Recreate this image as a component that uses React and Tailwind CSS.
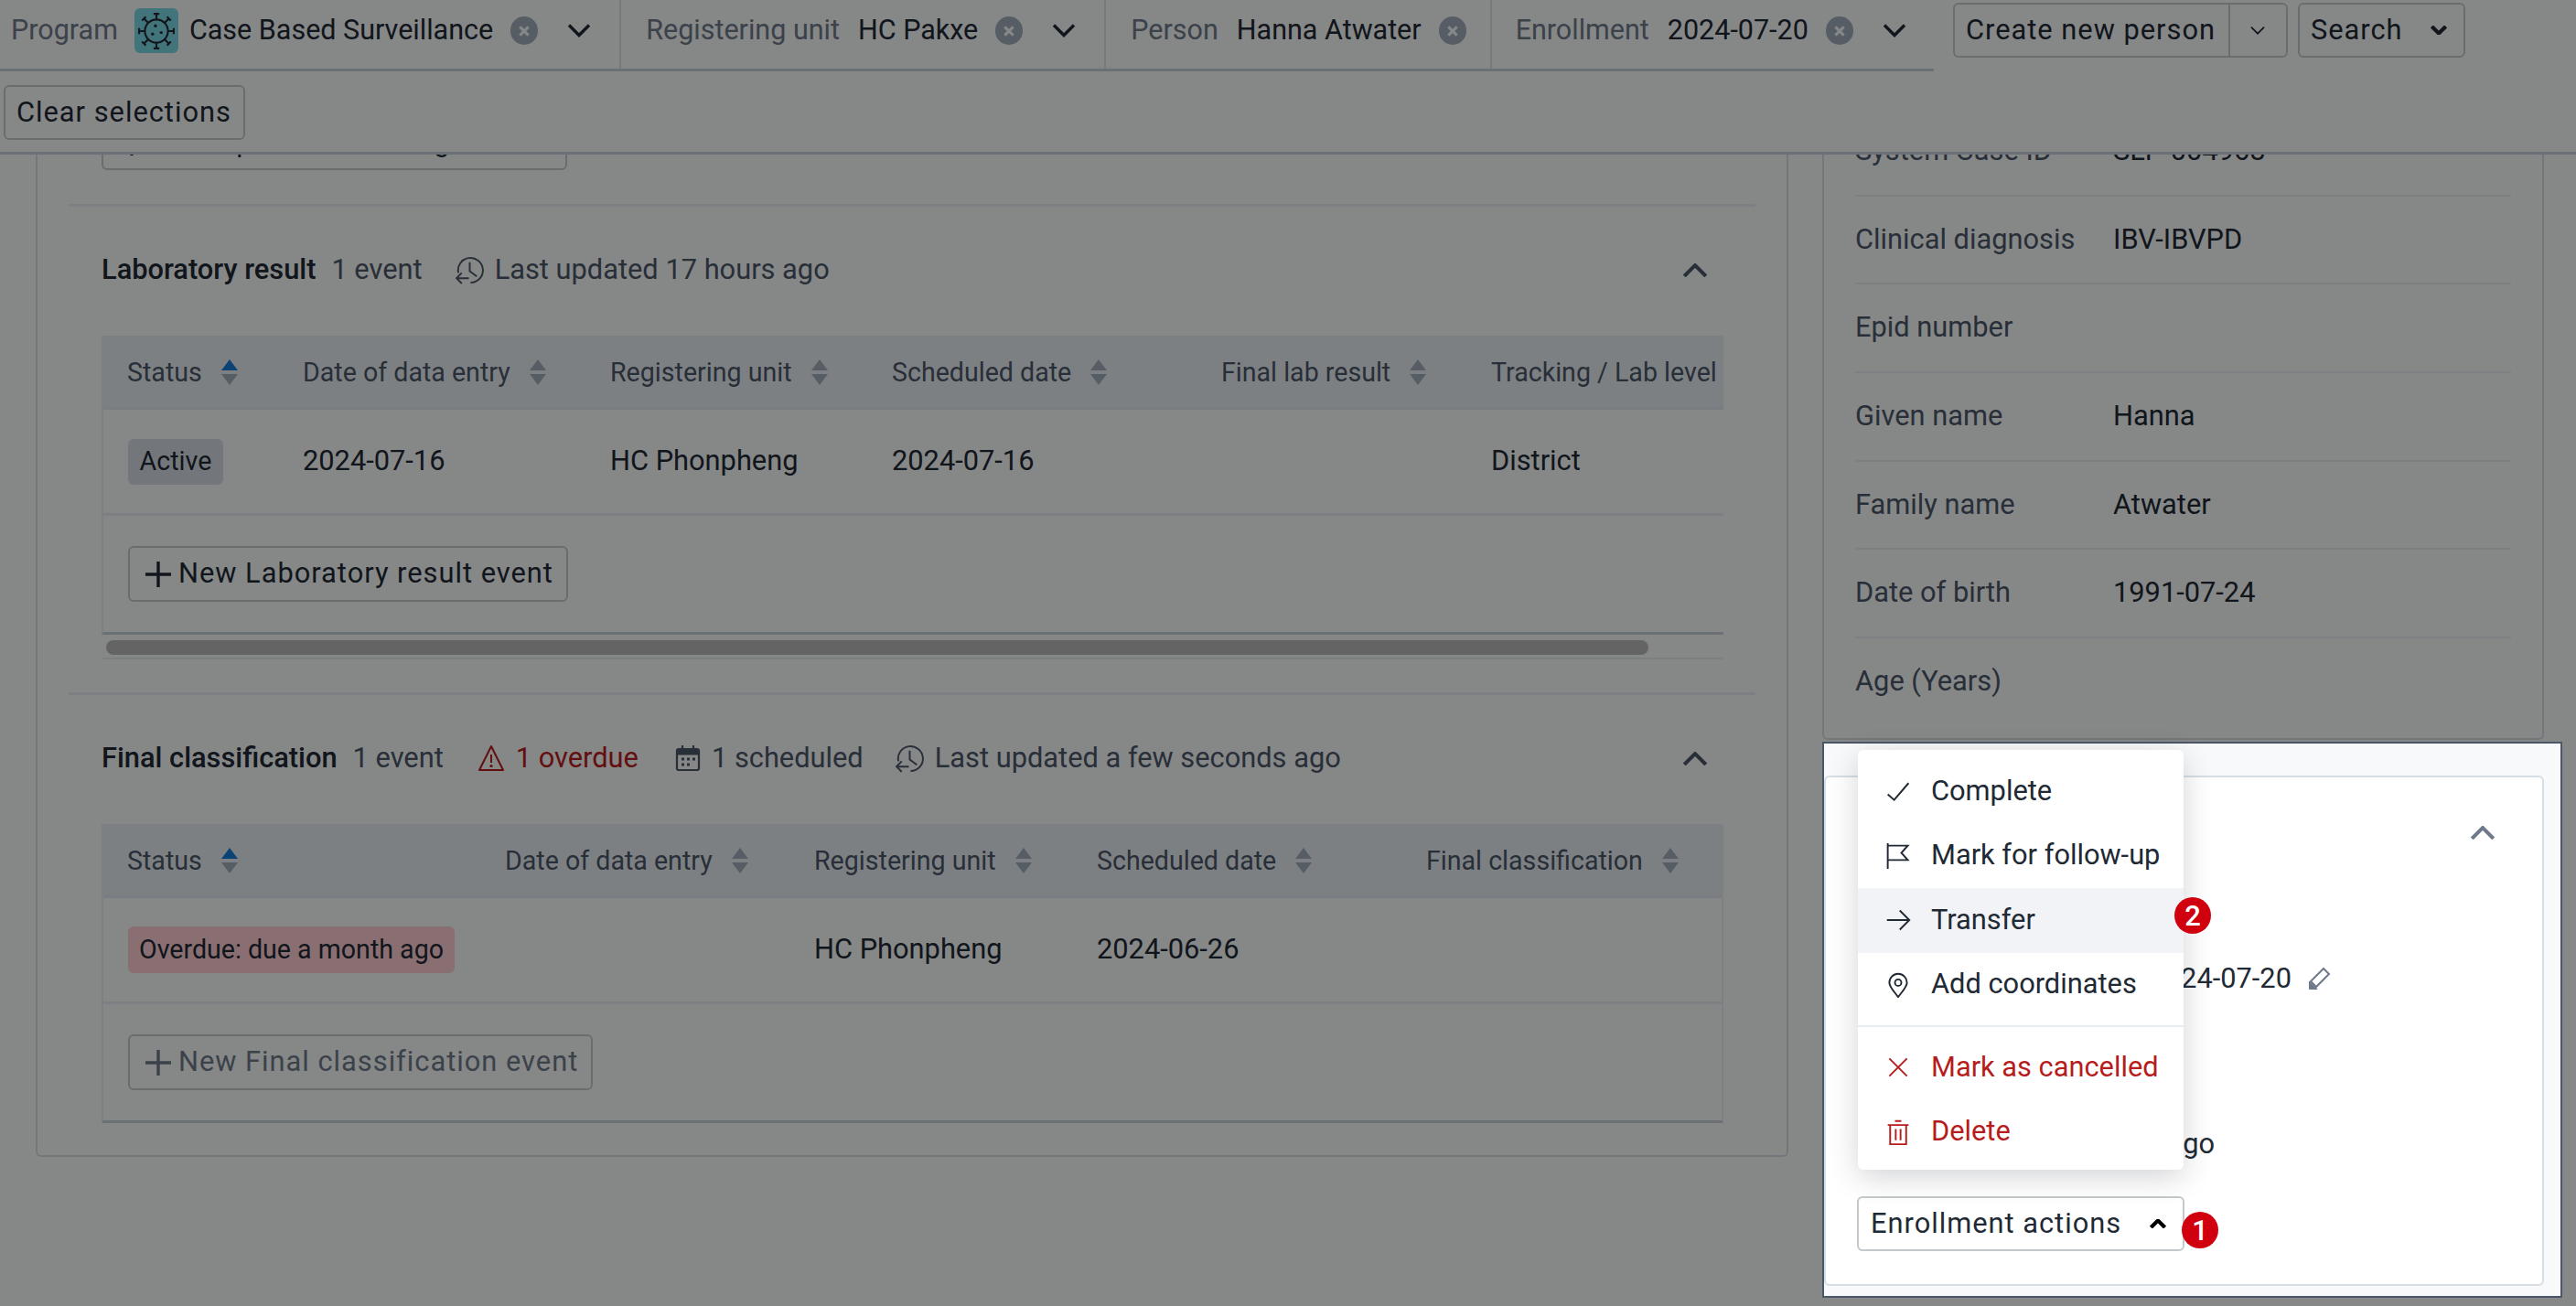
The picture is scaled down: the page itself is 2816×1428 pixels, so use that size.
const Chevron = ({ up, className = "", weight = 3.4 }) => (
  <svg viewBox="0 0 26 14" className={className} fill="none" stroke="currentColor" strokeWidth={weight}>
    <path d={up ? "M2 13 13 2l11 11" : "M2 1l11 11L24 1"} />
  </svg>
);

const ClearIcon = () => (
  <span className="flex h-[31px] w-[30px] shrink-0 items-center justify-center rounded-full bg-[#a0adba]">
    <svg viewBox="0 0 12 12" className="h-[14px] w-[14px]" stroke="#f8f9fa" strokeWidth="2.6">
      <path d="M2 2l8 8M10 2l-8 8" />
    </svg>
  </span>
);

const VirusIcon = () => (
  <span className="-ml-[2px] mr-3 flex h-[49px] w-12 shrink-0 items-center justify-center rounded-md bg-[#7ad7e4]">
    <svg viewBox="0 0 40 40" className="h-[42px] w-[42px]" fill="none" stroke="#212934" strokeWidth="2">
      <circle cx="20" cy="20" r="12" />
      <path d="M20 8V2M20 32v6M8 20H2M32 20h6M11.5 11.5 7 7M28.5 11.5 33 7M11.5 28.5 7 33M28.5 28.5 33 33" />
      <path d="M17 2h6M17 38h6M2 17v6M38 17v6M5 9l4-4M31 5l4 4M5 31l4 4M31 35l4-4" />
      <circle cx="19" cy="14.5" r="1.6" fill="#212934" stroke="none" />
      <circle cx="16" cy="23" r="1.6" fill="#212934" stroke="none" />
      <circle cx="25" cy="21.5" r="1.6" fill="#212934" stroke="none" />
    </svg>
  </span>
);

const Selector = ({ label, value, icon, gap, hasChevron = true }) => (
  <div className={`flex h-full shrink-0 items-center whitespace-nowrap pb-2 text-[30.5px] ${gap}`}>
    <span className="mr-5 text-[#6e7a8a]">{label}</span>
    {icon}
    <span className="mr-[19px] text-[#212934]">{value}</span>
    <ClearIcon />
    {hasChevron && <Chevron className="ml-8 h-[15px] w-[26px] text-[#212934]" />}
  </div>
);

const SortIcon = ({ active }) => (
  <svg viewBox="0 0 18 28" className="h-7 w-[18px] shrink-0">
    <path d="M9 0l9 12H0z" fill={active ? "#147cd7" : "#a0adba"} />
    <path d="M9 28L0 16h18z" fill="#a0adba" />
  </svg>
);

const HistoryIcon = () => (
  <svg viewBox="0 0 32 32" className="h-[31px] w-[31px] shrink-0" fill="none" stroke="#4a5768" strokeWidth="2">
    <path d="M17 30A14 14 0 1 0 3.2 19" />
    <path d="M16 7v10l8 6" />
    <path d="M1 25h14M7 19l-6 6 6 6" />
  </svg>
);

const WarningIcon = () => (
  <svg viewBox="0 0 30 30" className="h-[30px] w-[30px] shrink-0" fill="none" stroke="#b71c1c" strokeWidth="2" strokeLinejoin="round">
    <path d="M15 2 28 28H2z" />
    <path d="M15 11v9" />
    <circle cx="15" cy="23.5" r="1.6" fill="#b71c1c" stroke="none" />
  </svg>
);

const CalendarIcon = () => (
  <svg viewBox="0 0 28 28" className="h-7 w-7 shrink-0" fill="none" stroke="#4a5768" strokeWidth="2.2">
    <rect x="2" y="4" width="24" height="23" rx="2" />
    <path d="M2 7.5h24" strokeWidth="6" />
    <path d="M8 0v5M20 0v5" />
    <path d="M7 15h3M13 15h3M19 15h3M7 21h3M13 21h3" strokeWidth="3" />
  </svg>
);

const Table = ({ columns, template, badge, cells, button, disabled, bordered }) => (
  <div className={`border-x-2 border-t-2 border-b-[3px] border-x-[#e8edf2] border-t-[#e8edf2] border-b-[#c4d0da] bg-[#f8f9fa] ${bordered ? "" : "border-r-0"}`}>
    <div className={`grid h-[79px] items-center overflow-hidden border-b-[3px] border-[#dfe5ec] bg-[#e8edf2] text-[28.6px] text-[#4a5768] ${template}`}>
      {columns.map((col, i) => (
        <div key={col.name} className="flex items-center whitespace-nowrap pl-[26px]">
          <span className="mr-[21px]">{col.name}</span>
          {col.sort !== false && <SortIcon active={i === 0} />}
        </div>
      ))}
    </div>
    <div className={`grid h-[116px] items-center border-b-[3px] border-[#e8edf2] text-[#212934] ${template}`}>
      <div className="pl-[27px]">{badge}</div>
      {cells.map((cell, i) => (
        <div key={i} className="whitespace-nowrap pl-[26px]">{cell}</div>
      ))}
    </div>
    <div className="px-[27px] py-[33px]">
      <button className={`flex h-[61px] items-center rounded-md border-2 border-[#c4c9cc] pl-[17px] pr-[14px] tracking-[1px] ${disabled ? "text-[#6e7a8a]" : "text-[#212934]"}`}>
        <svg viewBox="0 0 28 28" className="mr-2 h-7 w-7" stroke="currentColor" strokeWidth="3.4">
          <path d="M14 0v28M0 14h28" />
        </svg>
        {button}
      </button>
    </div>
  </div>
);

const SectionHead = ({ title, children }) => (
  <div className="flex h-[50px] items-center text-[#4a5768]">
    <span className="mr-[17px] font-medium text-[#212934]">{title}</span>
    {children}
    <Chevron up weight={3.8} className="ml-auto mr-4 h-[15px] w-[28px] text-[#4a5768]" />
  </div>
);

const labColumns = [
  { name: "Status" },
  { name: "Date of data entry" },
  { name: "Registering unit" },
  { name: "Scheduled date" },
  { name: "Final lab result" },
  { name: "Tracking / Lab level", sort: false },
];

const finalColumns = [
  { name: "Status" },
  { name: "Date of data entry" },
  { name: "Registering unit" },
  { name: "Scheduled date" },
  { name: "Final classification" },
];

const profileRows = [
  ["System Case ID", "SLP-004968"],
  ["Clinical diagnosis", "IBV-IBVPD"],
  ["Epid number", ""],
  ["Given name", "Hanna"],
  ["Family name", "Atwater"],
  ["Date of birth", "1991-07-24"],
  ["Age (Years)", ""],
];

const MenuIcon = ({ children, color = "#212934" }) => (
  <svg viewBox="0 0 16 16" className="mr-[22px] h-7 w-7 shrink-0" fill="none" stroke={color} strokeWidth="1.1">
    {children}
  </svg>
);

const MenuItem = ({ icon, label, danger, active }) => (
  <div className={`flex h-[70.5px] items-center pl-[30px] ${danger ? "text-[#b71c1c]" : "text-[#212934]"} ${active ? "bg-[#f1f3f7]" : ""}`}>
    <MenuIcon color={danger ? "#b71c1c" : "#212934"}>{icon}</MenuIcon>
    {label}
  </div>
);

const Badge = ({ n, className }) => (
  <span className={`absolute flex h-10 w-10 items-center justify-center rounded-full bg-[#d0000f] text-[31px] font-medium text-white ${className}`}>
    {n}
  </span>
);

export default function App() {
  return (
    <div className="relative flex h-[1428px] w-[2816px] flex-col overflow-hidden bg-[#f8f9fa] font-['Roboto',sans-serif] text-[30.8px] leading-none">
      <header className="h-[169px] shrink-0 border-b-[3px] border-[#c4d0da] bg-[#f8f9fa]">
        <div className="flex h-[78px]">
          <div className="flex h-full w-[2114px] shrink-0 border-b-[3px] border-[#c4d0da]">
            <Selector label="Program" value="Case Based Surveillance" icon={<VirusIcon />} gap="pl-3 pr-[31px] border-r-2 border-[#dbe2e9]" />
            <Selector label="Registering unit" value="HC Pakxe" gap="pl-[27px] pr-[31px] border-r-2 border-[#dbe2e9]" />
            <Selector label="Person" value="Hanna Atwater" hasChevron={false} gap="pl-[27px] pr-[26px] border-r-2 border-[#dbe2e9]" />
            <Selector label="Enrollment" value="2024-07-20" gap="pl-[26px] pr-[30px]" />
          </div>
          <div className="ml-[21px] mt-[3px] flex h-[60px] rounded-md border-2 border-[#c4c9cc] text-[#212934]">
            <span className="flex items-center whitespace-nowrap border-r-2 border-[#c4c9cc] pl-3 pr-[14px] tracking-[1px]">Create new person</span>
            <span className="flex w-[61px] items-center justify-center">
              <Chevron weight={2.6} className="h-[9px] w-[18px]" />
            </span>
          </div>
          <div className="ml-[11px] mt-[3px] flex h-[60px] w-[183px] items-center rounded-md border-2 border-[#c4c9cc] pl-3 tracking-[1px] text-[#212934]">
            Search
            <Chevron weight={6} className="ml-auto mr-[18px] h-[10px] w-[18px]" />
          </div>
        </div>
        <button className="ml-1 mt-[15px] flex h-[60px] w-[264px] items-center whitespace-nowrap rounded-md border-2 border-[#c4c9cc] pl-3 tracking-[1px] text-[#212934]">
          Clear selections
        </button>
      </header>

      <main className="flex min-h-0 flex-1 items-start overflow-hidden">
        <section className="ml-[39px] -mt-[69px] h-[1165px] w-[1916px] shrink-0 rounded-b-md border-x-2 border-b-2 border-[#d5dde5] px-[34px]">
          <div className="h-[123px] pl-[36px] pt-[26px]">
            <button className="flex h-[60px] w-[509px] items-center rounded-md border-2 border-[#c4c9cc] pl-[17px] tracking-[1px] text-[#212934]">
              <svg viewBox="0 0 28 28" className="mr-2 h-7 w-7" stroke="currentColor" strokeWidth="3.4">
                <path d="M14 0v28M0 14h28" />
              </svg>
              New Specimen testing event
            </button>
          </div>
          <div className="h-[534px] border-t-[3px] border-[#e8edf2] px-9 pt-[44px]">
            <SectionHead title="Laboratory result">
              <span className="mr-[36px]">1 event</span>
              <HistoryIcon />
              <span className="ml-3">Last updated 17 hours ago</span>
            </SectionHead>
            <div className="mt-[47px] w-[1773px]">
              <Table
                columns={labColumns}
                template="grid-cols-[192px_336px_308px_360px_295px_282px]"
                badge={<span className="inline-flex h-[50px] w-[104px] items-center justify-center rounded-md bg-[#d5dde5] text-[28.6px] text-[#212934]">Active</span>}
                cells={["2024-07-16", "HC Phonpheng", "2024-07-16", "", "District"]}
                button="New Laboratory result event"
              />
              <div className="h-[27px] border-b-2 border-[#e8edf2] pl-[5px] pt-[6px]">
                <div className="h-4 w-[1686px] rounded-lg bg-[#b9b9b9]" />
              </div>
            </div>
          </div>
          <div className="border-t-[3px] border-[#e8edf2] px-9 pt-[44px]">
            <SectionHead title="Final classification">
              <span className="mr-[37px]">1 event</span>
              <WarningIcon />
              <span className="ml-3 mr-10 text-[#b71c1c]">1 overdue</span>
              <CalendarIcon />
              <span className="ml-3 mr-[35px]">1 scheduled</span>
              <HistoryIcon />
              <span className="ml-3">Last updated a few seconds ago</span>
            </SectionHead>
            <div className="mt-[47px] w-[1773px]">
              <Table
                columns={finalColumns}
                template="grid-cols-[413px_338px_309px_360px_353px]"
                badge={<span className="inline-flex h-[51px] w-[357px] items-center justify-center rounded-md bg-[#ffcdd2] text-[28.6px] text-[#212934]">Overdue: due a month ago</span>}
                cells={["", "HC Phonpheng", "2024-06-26", ""]}
                button="New Final classification event"
                disabled
                bordered
              />
            </div>
          </div>
        </section>

        <aside className="ml-[37px] -mt-[69px] h-[709px] w-[789px] shrink-0 rounded-b-md border-x-2 border-b-2 border-[#d5dde5] px-[34px] pt-[18px]">
          {profileRows.map(([label, value], i) => (
            <div key={label} className={`flex h-[96.7px] items-center border-b-2 ${i < 6 ? "border-[#e8edf2]" : "border-transparent"}`}>
              <span className="w-[282px] text-[#4a5768]">{label}</span>
              <span className="text-[#212934]">{value}</span>
            </div>
          ))}
        </aside>
      </main>

      {/* spotlight over the dimmed page */}
      <div className="absolute left-[1992px] top-[811px] h-[608px] w-[809px] border-2 border-[#4a5768] bg-[#f8f9fa] pb-3 pr-[18px] pt-[35px] shadow-[0_0_0_3000px_rgba(0,0,0,0.46)]">
        <div className="relative h-[558px] rounded-md border-2 border-[#d5dde5] bg-white pl-[35px] text-[#212934]">
          <div className="flex h-[60px] items-start justify-end pr-[51px] pt-[53px]">
            <Chevron up weight={3.8} className="h-[15px] w-[28px] text-[#6e7a8a]" />
          </div>
          <div className="mt-[145px] flex w-[517px] items-center justify-end">
            <span>2024-07-20</span>
            <svg viewBox="0 0 25 26" className="ml-[18px] h-[26px] w-[25px]" fill="none" stroke="#6e7a8a" strokeWidth="2">
              <path d="M17 2l6 6L9 22 3 16z" />
              <path d="M1.5 16v8.5H10z" fill="#6e7a8a" strokeWidth="1" />
            </svg>
          </div>
          <div className="mt-[150px] flex w-[390px] justify-end">17 hours ago</div>
          <div className="absolute left-[34px] top-[458px] flex h-[60px] w-[358px] items-center whitespace-nowrap rounded-md border-2 border-[#c4c9cc] pl-[13px] tracking-[1px]">
            Enrollment actions
            <Chevron up weight={6} className="ml-auto mr-[18px] h-[10px] w-[18px] text-black" />
          </div>
          <Badge n="1" className="left-[389px] top-[475px]" />
        </div>

        <div className="absolute left-[37px] top-[7px] w-[356px] rounded-md bg-white pb-[6px] pt-[10px] shadow-[0_8px_32px_rgba(33,41,52,0.2)]">
          <MenuItem label="Complete" icon={<path d="M1.5 10l4 3.5L14.5 3" />} />
          <MenuItem label="Mark for follow-up" icon={<path d="M1.5 0v16M1.5 1.5h12.5l-4 4.5 4 4.5H1.5" />} />
          <MenuItem label="Transfer" active icon={<path d="M1 8h14M9 2l6 6-6 6" />} />
          <MenuItem
            label="Add coordinates"
            icon={<>
              <path d="M8 15.5C5 11.5 2.5 9 2.5 6.5a5.5 5.5 0 0 1 11 0C13.5 9 11 11.5 8 15.5z" />
              <circle cx="8" cy="6.5" r="2" />
            </>}
          />
          <div className="my-[9px] h-[2px] bg-[#e8edf2]" />
          <MenuItem danger label="Mark as cancelled" icon={<path d="M2.5 2.5l11 11M13.5 2.5l-11 11" />} />
          <MenuItem
            danger
            label="Delete"
            icon={<>
              <path d="M3 3.5V15.5H13V3.5M1.5 3.5h13M6 1h4M6.5 6v7M9.5 6v7" />
            </>}
          />
          <Badge n="2" className="left-[346px] top-[161px]" />
        </div>
      </div>
    </div>
  );
}
